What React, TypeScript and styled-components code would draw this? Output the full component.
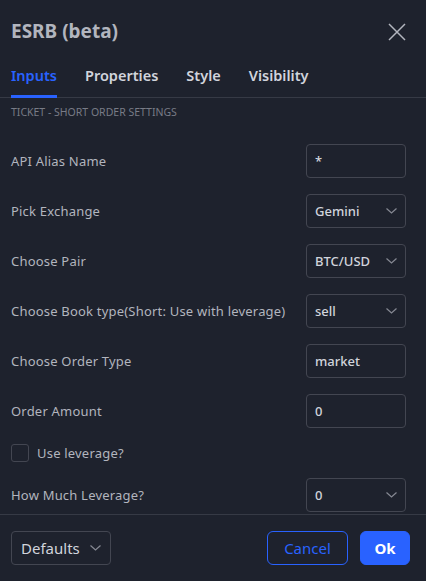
import React from 'react';
import styled, { createGlobalStyle } from 'styled-components';

const palette = {
  bg: '#1e222d',
  line: '#434651',
  divider: '#363a45',
  text: '#d1d4dc',
  label: '#b2b5be',
  muted: '#787b86',
  blue: '#2962ff',
};

const GlobalStyle = createGlobalStyle`
  html, body {
    margin: 0;
    padding: 0;
    background: ${palette.bg};
  }
  body {
    font-family: "Noto Sans", "Liberation Sans", sans-serif;
    color: ${palette.text};
  }
`;

interface Field {
  label: string;
  value: string;
  select?: boolean;
}

const FIELDS: Field[] = [
  { label: 'API Alias Name', value: '*' },
  { label: 'Pick Exchange', value: 'Gemini', select: true },
  { label: 'Choose Pair', value: 'BTC/USD', select: true },
  { label: 'Choose Book type(Short: Use with leverage)', value: 'sell', select: true },
  { label: 'Choose Order Type', value: 'market' },
  { label: 'Order Amount', value: '0' },
];

const TABS = ['Inputs', 'Properties', 'Style', 'Visibility'];

const Chevron = () => (
  <svg width="11" height="6" viewBox="0 0 11 6" fill="none">
    <path d="M0.5 0.5 L5.5 5 L10.5 0.5" stroke="#868993" strokeWidth="1.2" />
  </svg>
);

const CloseIcon = () => (
  <svg width="18" height="18" viewBox="0 0 18 18" fill="none">
    <path d="M1 1 L17 17 M17 1 L1 17" stroke={palette.label} strokeWidth="1.5" />
  </svg>
);

const App: React.FC = () => {
  return (
    <>
      <GlobalStyle />
      <Dialog>
        <Header>
          <Title>ESRB (beta)</Title>
          <CloseButton>
            <CloseIcon />
          </CloseButton>
        </Header>
        <TabBar>
          {TABS.map((tab, i) => (
            <Tab key={tab} active={i === 0}>
              {tab}
            </Tab>
          ))}
        </TabBar>
        <Content>
          <SectionTitle>Ticket - Short Order Settings</SectionTitle>
          <Rows>
            {FIELDS.map(field => (
              <Row key={field.label}>
                <Label>{field.label}</Label>
                <InputBox>
                  <span>{field.value}</span>
                  {field.select && <Chevron />}
                </InputBox>
              </Row>
            ))}
            <CheckRow>
              <CheckBox />
              <Label>Use leverage?</Label>
            </CheckRow>
            <Row>
              <Label>How Much Leverage?</Label>
              <InputBox>
                <span>0</span>
                <Chevron />
              </InputBox>
            </Row>
          </Rows>
        </Content>
        <Footer>
          <DefaultsButton>
            <span>Defaults</span>
            <Chevron />
          </DefaultsButton>
          <FooterActions>
            <Button variant="outline">Cancel</Button>
            <Button variant="primary">Ok</Button>
          </FooterActions>
        </Footer>
      </Dialog>
    </>
  );
};

const Dialog = styled.div`
  width: 426px;
  height: 581px;
  background: ${palette.bg};
  display: flex;
  flex-direction: column;
  overflow: hidden;
`;

const Header = styled.div`
  height: 62px;
  display: flex;
  align-items: center;
  justify-content: space-between;
  padding: 0 20px 0 11px;
  box-sizing: border-box;
`;

const Title = styled.div`
  font-size: 19px;
  font-weight: 700;
  color: ${palette.label};
`;

const CloseButton = styled.div`
  width: 18px;
  height: 18px;
  display: flex;
  margin-top: 1px;
`;

const TabBar = styled.div`
  height: 36px;
  display: flex;
  gap: 28px;
  padding: 0 11px;
  box-shadow: inset 0 -1px 0 ${palette.divider};
`;

const Tab = styled.div<{ active?: boolean }>`
  position: relative;
  padding-top: 3px;
  font-size: 14.5px;
  font-weight: 600;
  line-height: 20px;
  color: ${p => (p.active ? palette.blue : palette.text)};

  &::after {
    content: '';
    display: ${p => (p.active ? 'block' : 'none')};
    position: absolute;
    left: 0;
    right: 0;
    bottom: 0;
    height: 3px;
    background: ${palette.blue};
  }
`;

const Content = styled.div`
  flex: 1;
  padding: 7px 20px 0 11px;
  overflow: hidden;
`;

const SectionTitle = styled.div`
  font-size: 10.5px;
  line-height: 14px;
  text-transform: uppercase;
  color: ${palette.muted};
  margin-bottom: 25px;
`;

const Rows = styled.div`
  display: flex;
  flex-direction: column;
  gap: 16px;
`;

const Row = styled.div`
  display: flex;
  align-items: center;
  justify-content: space-between;
  height: 34px;
`;

const Label = styled.div`
  font-size: 13px;
  letter-spacing: 0.2px;
  color: ${palette.label};
`;

const InputBox = styled.div`
  width: 100px;
  height: 34px;
  box-sizing: border-box;
  border: 1px solid ${palette.line};
  border-radius: 4px;
  display: flex;
  align-items: center;
  justify-content: space-between;
  padding: 0 8px 0 8px;
  font-size: 13px;
  font-weight: 500;
  color: ${palette.text};
`;

const CheckRow = styled.div`
  display: flex;
  align-items: center;
  gap: 8px;
  height: 18px;
`;

const CheckBox = styled.div`
  width: 18px;
  height: 18px;
  box-sizing: border-box;
  border: 1px solid ${palette.line};
  border-radius: 3px;
`;

const Footer = styled.div`
  border-top: 1px solid ${palette.divider};
  padding: 16px 16px 16px 11px;
  display: flex;
  align-items: center;
  justify-content: space-between;
`;

const DefaultsButton = styled.div`
  width: 100px;
  height: 34px;
  box-sizing: border-box;
  border: 1px solid ${palette.line};
  border-radius: 4px;
  display: flex;
  align-items: center;
  justify-content: space-between;
  padding: 0 9px 0 9px;
  font-size: 15px;
  color: ${palette.text};
`;

const FooterActions = styled.div`
  display: flex;
  gap: 12px;
`;

const Button = styled.div<{ variant: 'outline' | 'primary' }>`
  width: ${p => (p.variant === 'primary' ? '50px' : '81px')};
  height: 34px;
  box-sizing: border-box;
  border-radius: 6px;
  display: flex;
  align-items: center;
  justify-content: center;
  font-size: 15px;
  border: 1px solid ${palette.blue};
  background: ${p => (p.variant === 'primary' ? palette.blue : 'transparent')};
  color: ${p => (p.variant === 'primary' ? '#ffffff' : palette.blue)};
  font-weight: ${p => (p.variant === 'primary' ? 700 : 400)};
`;

export default App;
